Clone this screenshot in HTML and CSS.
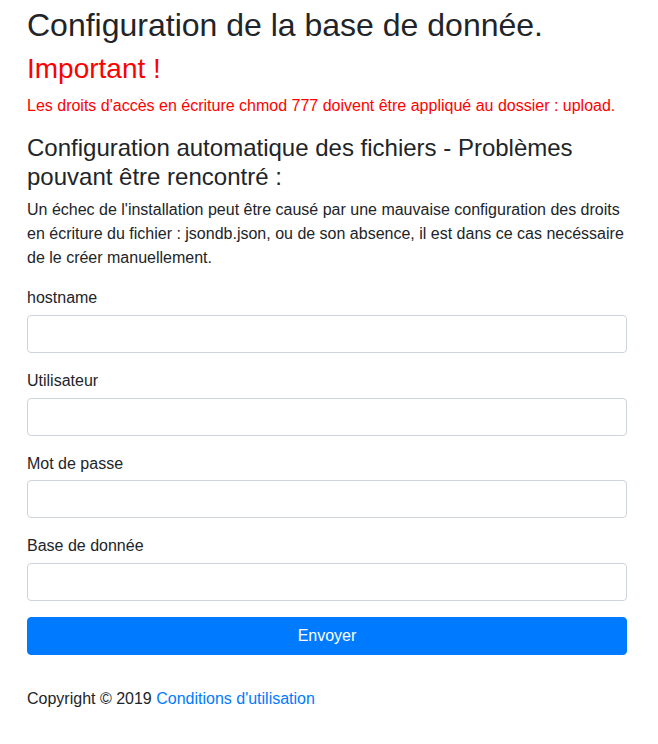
FILE: index.html
```html
<!DOCTYPE html>
<html lang="fr">
<head>
<meta charset="utf-8">
<title>Configuration</title>
<link rel="stylesheet" href="styles.css">
</head>
<body>
<div class="container">
  <h1 class="title">Configuration de la base de donnée.</h1>
  <h2 class="important">Important !</h2>
  <p class="warning">Les droits d'accès en écriture chmod 777 doivent être appliqué au dossier : upload.</p>
  <h4 class="subtitle">Configuration automatique des fichiers - Problèmes pouvant être rencontré :</h4>
  <p class="info">Un échec de l'installation peut être causé par une mauvaise configuration des droits en écriture du fichier : jsondb.json, ou de son absence, il est dans ce cas necéssaire de le créer manuellement.</p>
  <form class="form">
    <div class="form-group">
      <label class="label" for="hostname">hostname</label>
      <input class="input" type="text" id="hostname">
    </div>
    <div class="form-group">
      <label class="label" for="user">Utilisateur</label>
      <input class="input" type="text" id="user">
    </div>
    <div class="form-group">
      <label class="label" for="pass">Mot de passe</label>
      <input class="input" type="password" id="pass">
    </div>
    <div class="form-group">
      <label class="label" for="db">Base de donnée</label>
      <input class="input" type="text" id="db">
    </div>
    <button class="btn" type="button">Envoyer</button>
  </form>
  <footer class="footer">Copyright © 2019 <a class="link" href="#">Conditions d'utilisation</a></footer>
</div>
</body>
</html>
```

FILE: styles.css
```css
* { box-sizing: border-box; }
html, body { margin: 0; padding: 0; background: #fff; }
body {
  font-family: "Liberation Sans", Arial, sans-serif;
  font-size: 16px;
  line-height: 1.5;
  color: #212529;
}
.container {
  width: 600px;
  margin-left: 27px;
  padding-top: 6px;
}
.title {
  font-size: 32px;
  font-weight: 400;
  line-height: 1.2;
  margin: 0 0 8px;
}
.important {
  font-size: 28px;
  font-weight: 400;
  line-height: 1.2;
  color: #ff0000;
  margin: 0 0 8px;
}
.warning {
  color: #ff0000;
  margin: 0 0 16px;
}
.subtitle {
  font-size: 24px;
  font-weight: 400;
  line-height: 1.2;
  margin: 0 0 6px;
}
.info { margin: 0 0 16.5px; }
.form-group { margin-bottom: 16px; }
.label {
  display: block;
  margin-bottom: 4.8px;
}
.input {
  display: block;
  width: 100%;
  height: 38px;
  padding: 6px 12px;
  font: inherit;
  border: 1px solid #ced4da;
  border-radius: 4px;
  background: #fff;
}
.btn {
  display: block;
  width: 100%;
  height: 38px;
  font: inherit;
  color: #fff;
  background: #007bff;
  border: 1px solid #007bff;
  border-radius: 4px;
}
.footer { margin-top: 32px; }
.link { color: #007bff; text-decoration: none; }
```
